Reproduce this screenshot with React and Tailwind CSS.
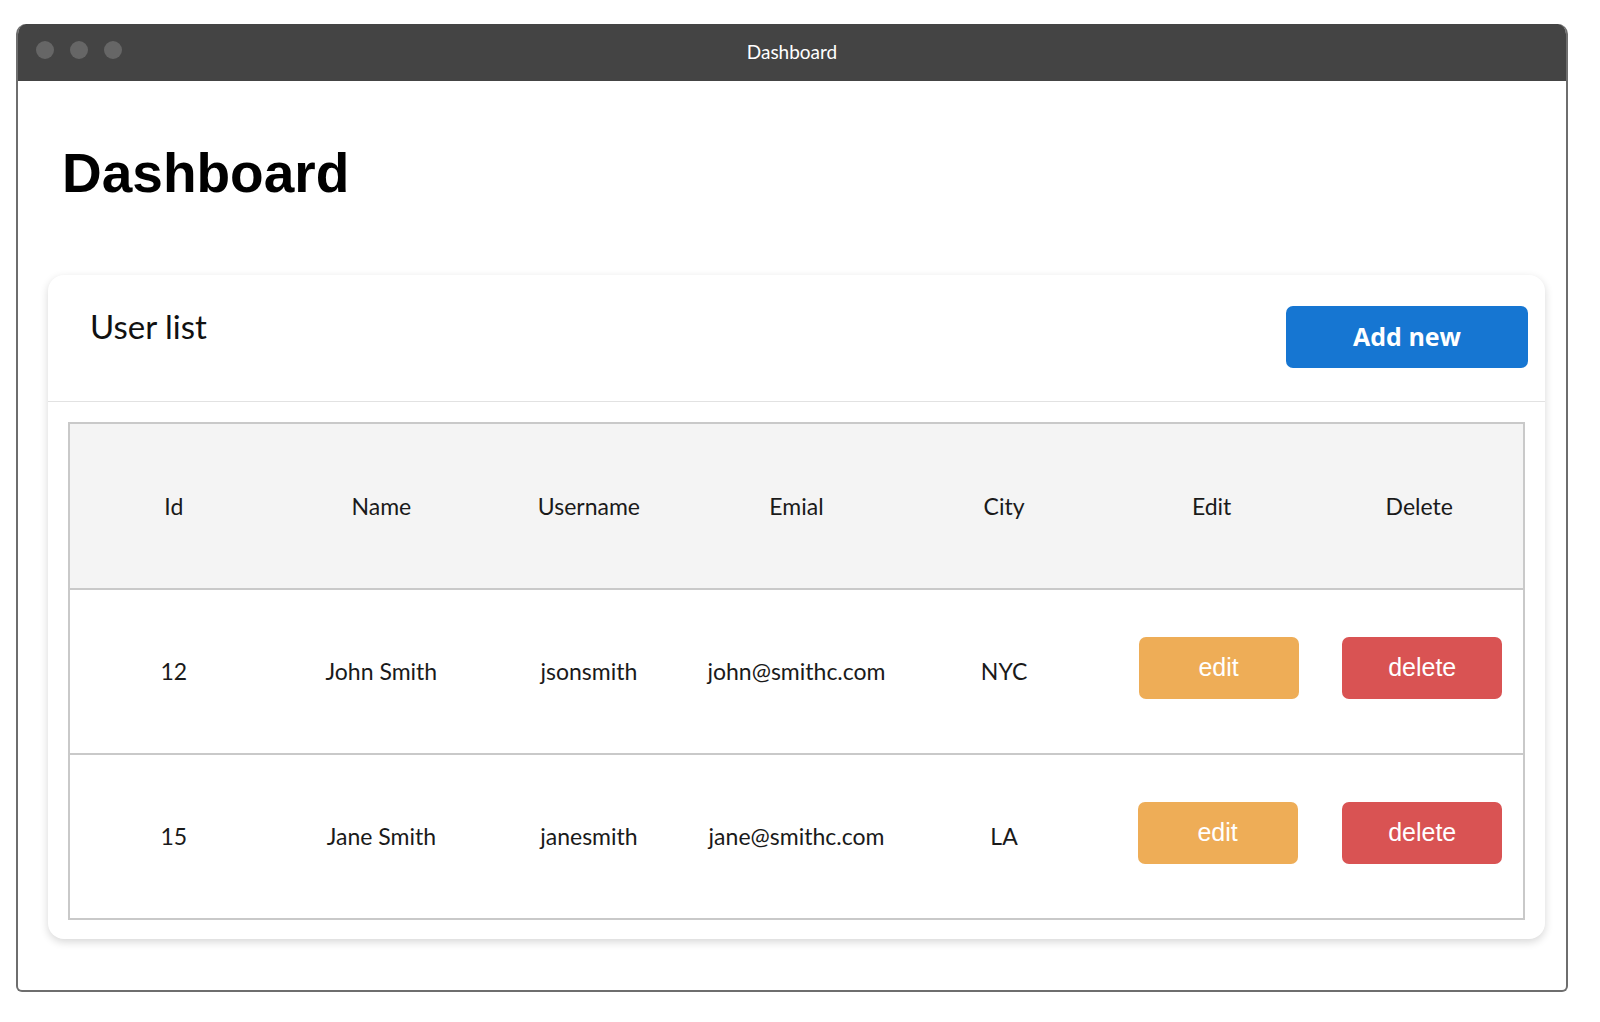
const users = [
  { id: 12, name: "John Smith", username: "jsonsmith", email: "john@smithc.com", city: "NYC" },
  { id: 15, name: "Jane Smith", username: "janesmith", email: "jane@smithc.com", city: "LA" },
];

const cols = ["Id", "Name", "Username", "Emial", "City", "Edit", "Delete"];

function Cell({ children }) {
  return <div className="flex items-center justify-center">{children}</div>;
}

export default function App() {
  return (
    <div className="w-[1600px] h-[1022px] bg-white pl-[16px] pt-[24px] font-['Lato',sans-serif]">
      <div className="w-[1552px] h-[968px] flex flex-col border-x-2 border-b-2 border-[#6e6e6e] rounded-t-[10px] rounded-b-[6px] overflow-hidden">
        {/* title bar */}
        <div className="relative h-[57px] shrink-0 bg-[#444444] flex items-center justify-center">
          <div className="absolute left-[18px] top-[17px] flex gap-[16px]">
            <span className="w-[18px] h-[18px] rounded-full bg-[#666666]" />
            <span className="w-[18px] h-[18px] rounded-full bg-[#666666]" />
            <span className="w-[18px] h-[18px] rounded-full bg-[#666666]" />
          </div>
          <span className="text-[19px] text-white">Dashboard</span>
        </div>

        {/* content */}
        <div className="flex-1 px-[30px] pt-[65px]">
          <h1 className="ml-[14px] text-[55px] leading-[55px] font-bold text-black font-['Liberation_Sans',Arial,sans-serif]">
            Dashboard
          </h1>

          <div className="mt-[74px] w-[1497px] h-[664px] rounded-[16px] bg-white shadow-[0_3px_8px_rgba(0,0,0,0.16)] flex flex-col">
            <div className="flex justify-between items-start pt-[31px] pr-[17px] pl-[42px] pb-[33px] border-b border-[#e2e2e2]">
              <h2 className="mt-[4px] text-[33px] leading-[33px] text-[#111111]">User list</h2>
              <button className="w-[242px] h-[62px] rounded-[7px] bg-[#1676d2] text-white text-[25px] font-bold font-['Open_Sans',sans-serif]">
                Add new
              </button>
            </div>

            <div className="px-[20px] pt-[20px]">
              <div className="w-[1457px] border-2 border-[#c9c9c9] text-[23px] text-[#1a1a1a]">
                <div className="grid grid-cols-7 h-[166px] bg-[#f4f4f4] border-b-2 border-[#c9c9c9]">
                  {cols.map((c) => (
                    <Cell key={c}>{c}</Cell>
                  ))}
                </div>
                {users.map((u, i) => (
                  <div
                    key={u.id}
                    className={`grid grid-cols-7 ${i === 0 ? "h-[165px] border-b-2 border-[#c9c9c9]" : "h-[163px]"}`}
                  >
                    <Cell>{u.id}</Cell>
                    <Cell>{u.name}</Cell>
                    <Cell>{u.username}</Cell>
                    <Cell>{u.email}</Cell>
                    <Cell>{u.city}</Cell>
                    <Cell>
                      <button
                        className={`${i === 0 ? "ml-[14px]" : "ml-[12px]"} mb-[8px] w-[160px] h-[62px] rounded-[7px] bg-[#eead57] text-white text-[25px] font-['Liberation_Sans',Arial,sans-serif]`}
                      >
                        edit
                      </button>
                    </Cell>
                    <Cell>
                      <button className="ml-[6px] mb-[8px] w-[160px] h-[62px] rounded-[7px] bg-[#d95353] text-white text-[25px] font-['Liberation_Sans',Arial,sans-serif]">
                        delete
                      </button>
                    </Cell>
                  </div>
                ))}
              </div>
            </div>
          </div>
        </div>
      </div>
    </div>
  );
}
